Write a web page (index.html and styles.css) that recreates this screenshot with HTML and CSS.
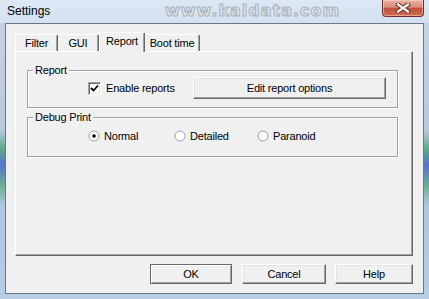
FILE: index.html
```html
<!DOCTYPE html>
<html>
<head>
<meta charset="utf-8">
<title>Settings</title>
<link rel="stylesheet" href="styles.css">
</head>
<body>
<div class="window">
  <div class="titlebar">
    <span class="title">Settings</span>
    <span class="watermark">www.kaldata.com</span>
    <div class="close">
      <svg width="16" height="10" viewBox="0 0 16 10"><path d="M3 1.5 L13 8.5 M13 1.5 L3 8.5" stroke="#5a2a22" stroke-width="4" stroke-linecap="square"/><path d="M3 1.5 L13 8.5 M13 1.5 L3 8.5" stroke="#fff" stroke-width="2.2" stroke-linecap="square"/></svg>
    </div>
  </div>
  <div class="frame-body">
    <div class="client">
      <div class="tabs">
        <div class="tab tab-filter">Filter</div>
        <div class="tab tab-gui">GUI</div>
        <div class="tab tab-report active">Report</div>
        <div class="tab tab-boot">Boot time</div>
      </div>
      <div class="panel">
        <div class="group group-report">
          <span class="group-title">Report</span>
          <div class="row">
            <label class="check">
              <span class="box"><svg width="9" height="9" viewBox="0 0 9 9"><path d="M1 4 L3.5 6.5 L8 1.5" stroke="#000" stroke-width="1.8" fill="none"/></svg></span>
              <span>Enable reports</span>
            </label>
            <div class="btn btn-edit">Edit report options</div>
          </div>
        </div>
        <div class="group group-debug">
          <span class="group-title">Debug Print</span>
          <div class="radios">
            <label class="radio r-normal"><span class="dot"><svg width="12" height="12" viewBox="0 0 12 12"><circle cx="6" cy="6" r="5" fill="#fff" stroke="#a0a0a0" stroke-width="1"/><circle cx="6" cy="6" r="1.8" fill="#000"/></svg></span><span>Normal</span></label>
            <label class="radio r-detailed"><span class="dot"><svg width="12" height="12" viewBox="0 0 12 12"><circle cx="6" cy="6" r="5" fill="#fff" stroke="#a0a0a0" stroke-width="1"/></svg></span><span>Detailed</span></label>
            <label class="radio r-paranoid"><span class="dot"><svg width="12" height="12" viewBox="0 0 12 12"><circle cx="6" cy="6" r="5" fill="#fff" stroke="#a0a0a0" stroke-width="1"/></svg></span><span>Paranoid</span></label>
          </div>
        </div>
      </div>
      <div class="buttons">
        <div class="btn btn-ok">OK</div>
        <div class="btn btn-cancel">Cancel</div>
        <div class="btn btn-help">Help</div>
      </div>
    </div>
  </div>
</div>
</body>
</html>
```
FILE: styles.css
```css
* { box-sizing: border-box; }
html, body { margin: 0; padding: 0; }
body {
  width: 429px;
  height: 299px;
  overflow: hidden;
  font-family: "Liberation Sans", Arial, sans-serif;
  font-size: 11px;
  letter-spacing: -0.2px;
  color: #000;
  background:
    linear-gradient(180deg, #c7d6e5 0px, #b8c9db 130px, #5aa88a 150px, #5a70d0 165px, #6aae92 185px, #aec6df 205px, #b7cde4 299px);
}
.window {
  position: relative;
  width: 429px;
  height: 299px;
  display: flex;
  flex-direction: column;
}
.titlebar {
  height: 23px;
  display: flex;
  align-items: flex-start;
  padding-left: 7px;
  background: linear-gradient(180deg, #dce8f4 0%, #d2e1f1 100%);
  position: relative;
}
.title {
  font-size: 12px;
  letter-spacing: 0;
  line-height: 14px;
  margin-top: 4px;
  color: #000;
}
.watermark {
  position: absolute;
  left: 165px;
  top: 2px;
  font-family: "DejaVu Sans", sans-serif;
  font-weight: bold;
  font-size: 16px;
  letter-spacing: 1px;
  color: #dfe5eb;
  -webkit-text-stroke: 1px #a9b2bb;
  line-height: 18px;
}
.close {
  margin-left: auto;
  margin-right: 5px;
  width: 42px;
  height: 17px;
  border: 1px solid #6e3026;
  border-top: none;
  border-radius: 0 0 4px 4px;
  background: linear-gradient(180deg, #eab0a2 0%, #d98a76 45%, #c3503a 52%, #cf6a50 100%);
  box-shadow: inset 0 0 0 1px rgba(255,220,210,0.5);
  display: flex;
  align-items: center;
  justify-content: center;
}
.frame-body {
  flex: 1;
  display: flex;
  padding: 0 5px 5px 5px;
}
.client {
  flex: 1;
  background: #f0f0f0;
  border: 1px solid #6b7684;
  display: flex;
  flex-direction: column;
  padding: 8px 10px 0 9px;
}
.tabs {
  display: flex;
  align-items: flex-end;
  height: 19px;
  position: relative;
  z-index: 2;
}
.tab {
  height: 17px;
  padding-top: 2px;
  line-height: 13px;
  text-align: center;
  background: #f0f0f0;
  border-top: 1px solid #fff;
  border-left: 1px solid #fff;
  border-right: 1px solid #696969;
  box-shadow: inset -1px 0 0 #a0a0a0;
  border-radius: 2px 2px 0 0;
}
.tab-filter { width: 43px; }
.tab-gui { width: 41px; border-left: none; }
.tab-report { width: 46px; }
.tab-boot { width: 55px; border-left: none; }
.tab.active {
  height: 20px;
  margin-bottom: -1px;
  padding-top: 2px;
  position: relative;
}
.panel {
  height: 205px;
  border-top: 1px solid #fff;
  border-left: 1px solid #fff;
  border-right: 1px solid #696969;
  border-bottom: 1px solid #696969;
  box-shadow: inset -1px -1px 0 #a0a0a0;
  padding: 18px 14px 0 11px;
  display: flex;
  flex-direction: column;
}
.group {
  position: relative;
  border: 1px solid #a0a0a0;
  box-shadow: inset 1px 1px 0 #fff, 1px 1px 0 #fff;
}
.group-title {
  position: absolute;
  top: -7px;
  left: 5px;
  padding: 0 2px;
  line-height: 13px;
  background: #f0f0f0;
}
.group-report {
  padding: 6px 11px 8px 60px;
}
.row {
  display: flex;
  align-items: center;
  height: 22px;
}
.check {
  display: flex;
  align-items: center;
  gap: 5px;
}
.box {
  width: 13px;
  height: 13px;
  background: #fff;
  border: 1px solid;
  border-color: #a0a0a0 #fff #fff #a0a0a0;
  box-shadow: inset 1px 1px 0 #696969, inset -1px -1px 0 #e3e3e3;
  display: flex;
  align-items: center;
  justify-content: center;
}
.btn {
  background: #f0f0f0;
  border: 1px solid;
  border-color: #fff #696969 #696969 #fff;
  box-shadow: inset -1px -1px 0 #a0a0a0, inset 1px 1px 0 #e3e3e3;
  display: flex;
  align-items: center;
  justify-content: center;
  line-height: 13px;
}
.btn-edit {
  margin-left: auto;
  width: 193px;
  height: 22px;
}
.group-debug {
  margin-top: 9px;
  padding: 11px 0 14px 60px;
}
.radios {
  display: flex;
  align-items: center;
  height: 13px;
}
.radio {
  display: flex;
  align-items: center;
  gap: 4px;
}
.dot { width: 12px; height: 12px; display: flex; }
.r-normal { width: 86px; }
.r-detailed { width: 83px; }
.buttons {
  display: flex;
  justify-content: flex-end;
  margin-top: 8px;
}
.buttons .btn { height: 20px; }
.btn-ok {
  width: 82px;
  border-color: #696969;
  box-shadow: inset 1px 1px 0 #fff, inset -1px -1px 0 #a0a0a0;
}
.btn-cancel { width: 84px; margin-left: 10px; }
.btn-help { width: 78px; margin-left: 9px; }
```
